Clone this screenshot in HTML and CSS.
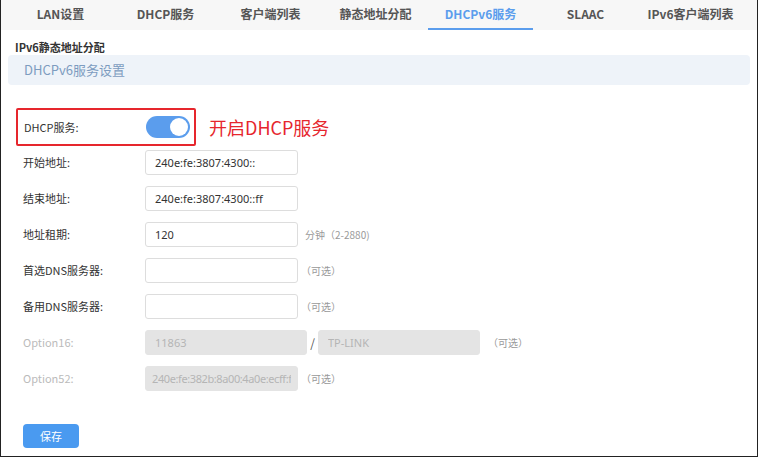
FILE: index.html
```html
<!DOCTYPE html>
<html lang="zh-CN">
<head>
    <meta charset="UTF-8">
    <title>DHCPv6服务</title>
    <link rel="stylesheet" href="styles.css">
</head>
<body>
    <div class="page">
        <div class="tabs">
            <div class="tab">LAN设置</div>
            <div class="tab">DHCP服务</div>
            <div class="tab">客户端列表</div>
            <div class="tab">静态地址分配</div>
            <div class="tab active">DHCPv6服务</div>
            <div class="tab">SLAAC</div>
            <div class="tab">IPv6客户端列表</div>
        </div>

        <div class="section-title">IPv6静态地址分配</div>
        <div class="panel-head">DHCPv6服务设置</div>

        <div class="form">
            <div class="switch-row">
                <div class="highlight">
                    <span class="label">DHCP服务:</span>
                    <span class="switch"><span class="knob"></span></span>
                </div>
                <span class="note">开启DHCP服务</span>
            </div>

            <div class="row">
                <span class="label">开始地址:</span>
                <input class="field" type="text" value="240e:fe:3807:4300::">
            </div>
            <div class="row">
                <span class="label">结束地址:</span>
                <input class="field" type="text" value="240e:fe:3807:4300::ff">
            </div>
            <div class="row">
                <span class="label">地址租期:</span>
                <input class="field" type="text" value="120">
                <span class="hint unit">分钟（2-2880)</span>
            </div>
            <div class="row">
                <span class="label">首选DNS服务器:</span>
                <input class="field" type="text" value="">
                <span class="hint">（可选）</span>
            </div>
            <div class="row">
                <span class="label">备用DNS服务器:</span>
                <input class="field" type="text" value="">
                <span class="hint">（可选）</span>
            </div>
            <div class="row disabled">
                <span class="label">Option16:</span>
                <input class="field short" type="text" value="11863" disabled>
                <span class="slash">/</span>
                <input class="field short" type="text" value="TP-LINK" disabled>
                <span class="hint wide">（可选）</span>
            </div>
            <div class="row disabled">
                <span class="label">Option52:</span>
                <input class="field tight" type="text" value="240e:fe:382b:8a00:4a0e:ecff:fe11:2233" disabled>
                <span class="hint">（可选）</span>
            </div>

            <button class="save">保存</button>
        </div>
    </div>
</body>
</html>
```

FILE: styles.css
```css
body {
    margin: 0;
    background-color: white;
    font-family: "Noto Sans CJK SC", "Noto Sans", sans-serif;
    color: #333;
}
.page {
    width: 758px;
    height: 457px;
    box-sizing: border-box;
    border: 1px solid #222;
    border-top: none;
    overflow: hidden;
}
.tabs {
    display: flex;
    height: 30px;
    padding-left: 7px;
    background-color: #f7f7f7;
}
.tab {
    width: 105px;
    box-sizing: border-box;
    text-align: center;
    font-size: 12px;
    font-weight: bold;
    color: #555;
    line-height: 28px;
    border-bottom: 2px solid transparent;
}
.tab.active {
    color: #5b9ded;
    border-bottom-color: #5b9ded;
}
.section-title {
    margin: 9px 0 0 14px;
    font-size: 11px;
    font-weight: bold;
    line-height: 16px;
}
.panel-head {
    margin: 0 7px 0 7px;
    height: 30px;
    padding-left: 16px;
    line-height: 30px;
    font-size: 13px;
    color: #7d9cc0;
    background-color: #eef3f9;
    border-radius: 4px;
}
.form {
    padding-top: 23px;
}
.switch-row {
    display: flex;
    align-items: center;
    height: 38px;
    margin-bottom: -2px;
}
.highlight {
    display: flex;
    align-items: center;
    width: 180px;
    height: 38px;
    box-sizing: border-box;
    margin-left: 15px;
    padding-left: 6px;
    border: 2px solid #e6262d;
    border-radius: 2px;
}
.highlight .label {
    width: 122px;
}
.switch {
    position: relative;
    width: 44px;
    height: 22px;
    border-radius: 11px;
    background-color: #5b9ded;
}
.knob {
    position: absolute;
    top: 2px;
    right: 2px;
    width: 18px;
    height: 18px;
    border-radius: 50%;
    background-color: white;
}
.note {
    margin-left: 13px;
    font-size: 18px;
    color: #e6262d;
    line-height: 24px;
}
.row {
    display: flex;
    align-items: center;
    height: 36px;
    padding-left: 22px;
}
.label {
    width: 122px;
    flex-shrink: 0;
    font-size: 11px;
    color: #333;
}
.field {
    width: 153px;
    height: 25px;
    box-sizing: border-box;
    padding: 0 9px;
    border: 1px solid #ddd;
    border-radius: 3px;
    font-family: "Noto Sans", "Noto Sans CJK SC", sans-serif;
    font-size: 11px;
    color: #333;
    background-color: white;
}
.field.short {
    width: 162px;
}
.field.tight {
    padding: 0 6px;
    letter-spacing: -0.4px;
}
.hint {
    margin-left: 3px;
    font-size: 10px;
    color: #999;
}
.hint.unit {
    margin-left: 7px;
}
.hint.wide {
    margin-left: 8px;
}
.slash {
    width: 11px;
    text-align: center;
    font-size: 12px;
    color: #555;
}
.disabled .label {
    color: #bbb;
}
.disabled .field {
    background-color: #e4e4e4;
    border-color: #e4e4e4;
    color: #b5b5b5;
}
.save {
    display: block;
    margin: 28px 0 0 22px;
    width: 56px;
    height: 24px;
    border: none;
    border-radius: 4px;
    background-color: #4a9af0;
    color: white;
    font-family: "Noto Sans CJK SC", sans-serif;
    font-size: 11px;
}
```
